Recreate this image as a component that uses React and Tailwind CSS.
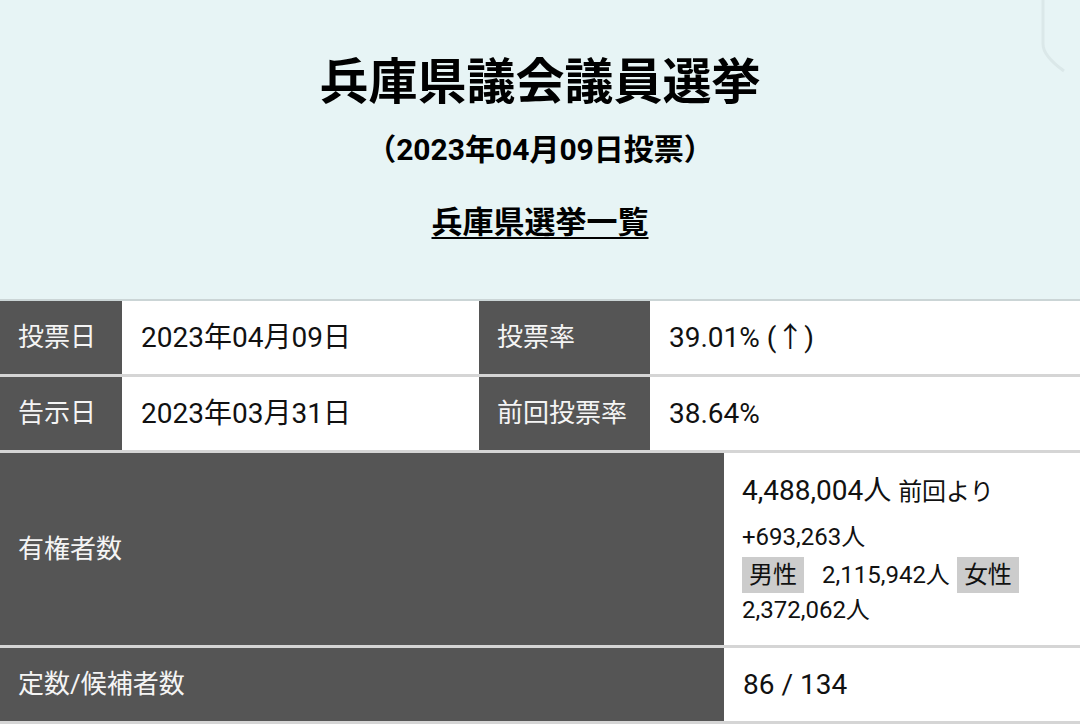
import React from 'react';

const rows = [
  { label: '投票日', value: '2023年04月09日', label2: '投票率', value2: '39.01% (↑)' },
  { label: '告示日', value: '2023年03月31日', label2: '前回投票率', value2: '38.64%' },
];

const Label = ({ children, className = '' }) => (
  <div className={`bg-[#555555] text-[#f4f4f4] text-[26px] flex items-center pl-[18px] ${className}`}>
    {children}
  </div>
);

const Value = ({ children, className = '' }) => (
  <div className={`bg-white text-[#111] text-[28px] flex items-center pl-[19px] ${className}`}>
    {children}
  </div>
);

const App = () => {
  return (
    <div className="w-[1080px] h-[725px] overflow-hidden bg-white font-['Roboto','Noto_Sans_CJK_JP',sans-serif]">
      {/* header */}
      <div className="relative h-[301px] bg-[#e7f4f5] border-b-2 border-[#cbd5d6] flex flex-col items-center text-black font-bold">
        <h1 className="mt-[58px] text-[49px] leading-none">兵庫県議会議員選挙</h1>
        <p className="mt-[28px] text-[30px] leading-none">（2023年04月09日投票）</p>
        <a href="#" className="mt-[42px] text-[31px] leading-none underline decoration-2 underline-offset-[4px]">
          兵庫県選挙一覧
        </a>
        <svg className="absolute top-0 right-0" width="60" height="80" viewBox="0 0 60 80">
          <path d="M23 0 V44 Q23 56 44 71" fill="none" stroke="#dbe8e9" strokeWidth="3" />
        </svg>
      </div>

      {/* table */}
      {rows.map((r) => (
        <div key={r.label} className="flex h-[76px] border-b-[3px] border-[#d5d5d5]">
          <Label className="w-[122px]">{r.label}</Label>
          <Value className="w-[357px]">{r.value}</Value>
          <Label className="w-[171px]">{r.label2}</Label>
          <Value className="flex-1">{r.value2}</Value>
        </div>
      ))}

      <div className="flex h-[195px] border-b-[3px] border-[#d5d5d5]">
        <Label className="w-[724px]">有権者数</Label>
        <div className="flex-1 bg-white text-[#111] pl-[18px] pt-[18px]">
          <div className="leading-[40px] text-[28px]">
            4,488,004人 <span className="text-[24px]">前回より</span>
          </div>
          <div className="pt-[5px] leading-[40px] text-[24px]">+693,263人</div>
          <div className="flex items-center h-[36px] text-[24px]">
            <span className="bg-[#cccccc] h-[36px] px-[7px] flex items-center">男性</span>
            <span className="ml-[18px]">2,115,942人</span>
            <span className="ml-[7px] bg-[#cccccc] h-[36px] px-[7px] flex items-center">女性</span>
          </div>
          <div className="leading-[34px] text-[24px]">2,372,062人</div>
        </div>
      </div>

      <div className="flex h-[76px] border-b-[3px] border-[#d5d5d5]">
        <Label className="w-[724px]">定数/候補者数</Label>
        <Value className="flex-1 pl-[18px]">86 / 134</Value>
      </div>
    </div>
  );
};

export default App;
